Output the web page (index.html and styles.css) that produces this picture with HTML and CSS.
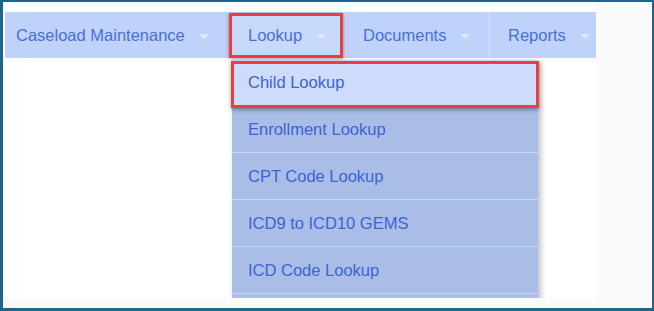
FILE: index.html
```html
<!DOCTYPE html>
<html lang="en">
<head>
  <meta charset="UTF-8">
  <title>Lookup Menu</title>
  <link rel="stylesheet" href="styles.css">
</head>
<body>

<div class="frame">
  <div class="panel">
    <ul class="nav">
      <li class="nav-item caseload">Caseload Maintenance <span class="caret"></span></li>
      <li class="nav-item lookup active">
        <span class="label">Lookup</span> <span class="caret"></span>
        <ul class="dropdown">
          <li class="drop-item current">Child Lookup</li>
          <li class="drop-item">Enrollment Lookup</li>
          <li class="drop-item">CPT Code Lookup</li>
          <li class="drop-item">ICD9 to ICD10 GEMS</li>
          <li class="drop-item">ICD Code Lookup</li>
          <li class="drop-item stub"></li>
        </ul>
      </li>
      <li class="nav-item documents">Documents <span class="caret"></span></li>
      <li class="nav-item reports">Reports <span class="caret"></span></li>
    </ul>
  </div>
</div>

</body>
</html>
```

FILE: styles.css
```css
body {
  margin: 0;
  font-family: 'Liberation Sans', Arial, sans-serif;
}

.frame {
  width: 654px;
  height: 311px;
  box-sizing: border-box;
  border: 2px solid #1f6589;
  border-left-width: 3px;
  border-bottom-width: 3px;
  background: #fafafa;
  overflow: hidden;
}

.panel {
  width: 593px;
  height: 296px;
  background: #fff;
  padding: 10px 0 0 2px;
  box-sizing: border-box;
  overflow: hidden;
}

.nav {
  list-style: none;
  margin: 0;
  padding: 0;
  display: flex;
  height: 46px;
  background: #bfd2fa;
  width: 591px;
}

.nav-item {
  position: relative;
  display: flex;
  align-items: center;
  padding-left: 17px;
  box-sizing: border-box;
  font-size: 16.5px;
  color: #4a6fd6;
  border-right: 1px solid #d6e2fc;
}

.caseload { width: 221px; padding-left: 11px; border-right: none; }
.lookup { width: 120px; padding-left: 22px; }
.documents { width: 144px; }
.reports { width: 106px; padding-left: 18px; border-right: none; }

.caret {
  display: inline-block;
  width: 0;
  height: 0;
  margin-left: 14px;
  margin-top: 2px;
  border-left: 5px solid transparent;
  border-right: 5px solid transparent;
  border-top: 5px solid #dde7fc;
}

.active {
  background: linear-gradient(#bfd2fa, #bfd2fa) no-repeat;
}

.active::before {
  content: "";
  position: absolute;
  left: 3px;
  top: 1px;
  width: 114px;
  height: 45px;
  background: #c8d8fb;
  z-index: 0;
}

.active .label,
.active .caret {
  position: relative;
  z-index: 1;
}

.active::after {
  content: "";
  position: absolute;
  left: 3px;
  top: 1px;
  width: 114px;
  height: 45px;
  box-sizing: border-box;
  border: 3px solid #ea3f3f;
  box-shadow: 0 1px 4px rgba(0,0,0,0.35);
  z-index: 1;
}

.dropdown {
  list-style: none;
  margin: 0;
  padding: 0;
  position: absolute;
  left: 6px;
  top: 48px;
  width: 306px;
  background: #a9bde7;
  box-shadow: 3px 2px 6px rgba(0,0,0,0.25);
  z-index: 2;
}

.drop-item {
  height: 46px;
  line-height: 46px;
  padding-left: 16px;
  border-top: 1px solid #cbd8f3;
  color: #3c64d3;
  font-size: 16.5px;
}

.drop-item:first-child {
  border-top: none;
}

.current {
  position: relative;
  background: #cddcfb;
  height: 45px;
  line-height: 44px;
}

.current::after {
  content: "";
  position: absolute;
  left: -1px;
  top: 1px;
  right: -1px;
  height: 41px;
  border: 3px solid #ea3f3f;
  box-shadow: 0 2px 4px rgba(0,0,0,0.35);
}
```
